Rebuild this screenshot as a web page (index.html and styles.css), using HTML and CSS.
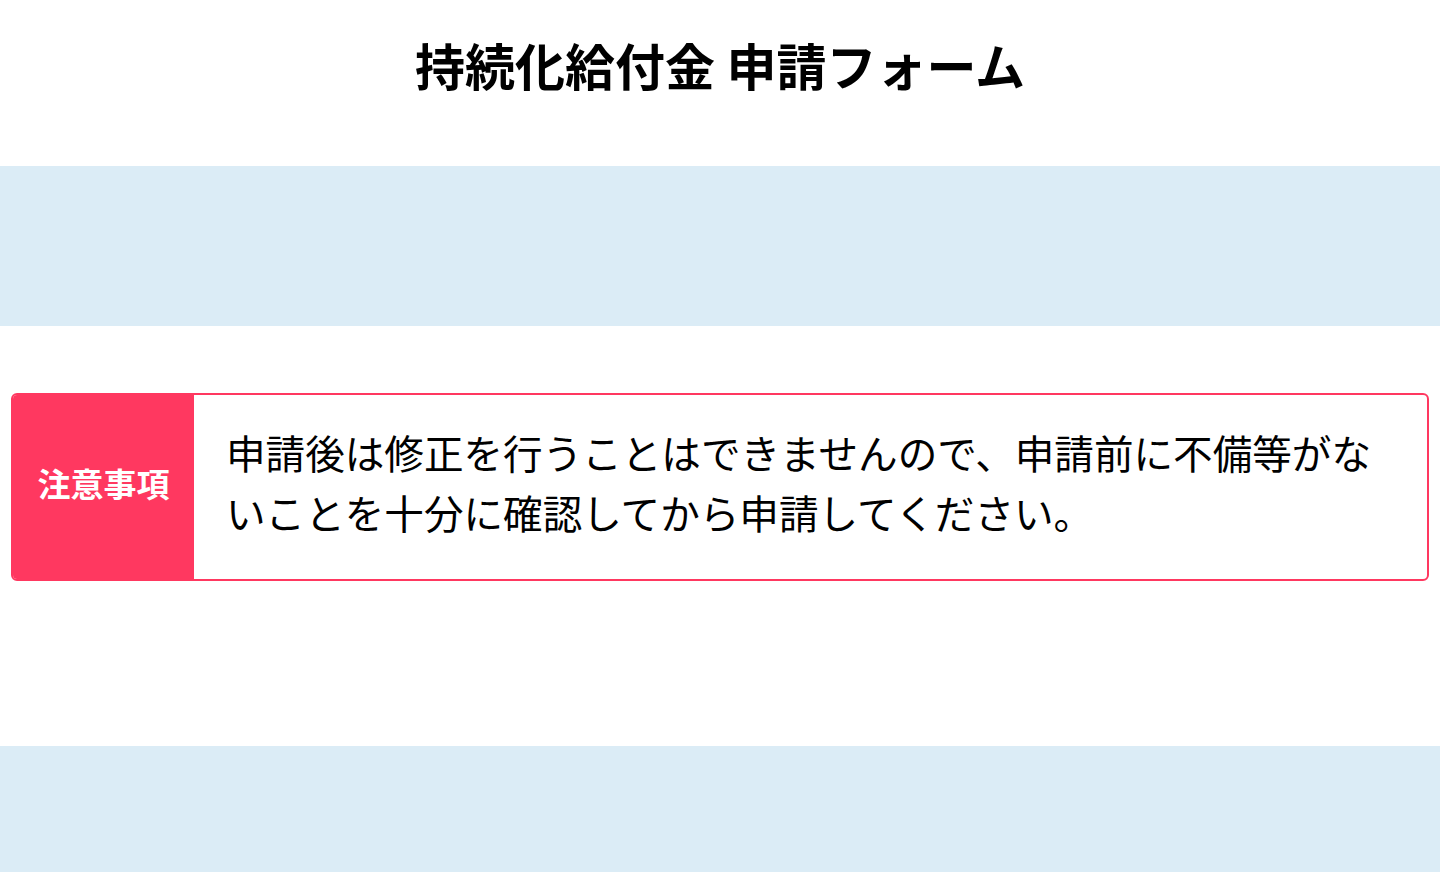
FILE: index.html
```html
<!DOCTYPE html>
<html lang="ja">
<head>
  <meta charset="UTF-8">
  <meta name="viewport" content="width=device-width, initial-scale=1.0">
  <title>持続化給付金 申請フォーム</title>
  <link rel="stylesheet" href="styles.css">
</head>
<body>
  <header class="page-header">
    <h1>持続化給付金 申請フォーム</h1>
  </header>

  <section class="band"></section>

  <section class="notice-wrap">
    <div class="notice">
      <div class="notice-label">注意事項</div>
      <div class="notice-body">
        申請後は修正を行うことはできませんので、申請前に不備等がないことを十分に確認してから申請してください。
      </div>
    </div>
  </section>

  <section class="band band-bottom"></section>
</body>
</html>
```

FILE: styles.css
```css
body {
  font-family: "Noto Sans CJK JP", "Noto Sans", sans-serif;
  background-color: #fff;
  color: #000;
  margin: 0;
  padding: 0;
}

.page-header {
  height: 166px;
  display: flex;
  justify-content: center;
  padding-top: 31px;
  box-sizing: border-box;
}

.page-header h1 {
  margin: 0;
  font-size: 50px;
  font-weight: bold;
  line-height: 66px;
}

.band {
  background-color: #dbecf6;
  height: 160px;
}

.band-bottom {
  height: 126px;
}

.notice-wrap {
  padding: 67px 11px 165px;
}

.notice {
  display: flex;
  border: 2px solid #ff3860;
  border-radius: 6px;
  overflow: hidden;
}

.notice-label {
  background-color: #ff3860;
  color: #fff;
  font-size: 33px;
  font-weight: bold;
  width: 181px;
  flex-shrink: 0;
  display: flex;
  align-items: center;
  justify-content: center;
  padding-bottom: 8px;
  box-sizing: border-box;
}

.notice-body {
  padding: 27px 33px 37px 32px;
  font-size: 39.6px;
  line-height: 60px;
}
```
